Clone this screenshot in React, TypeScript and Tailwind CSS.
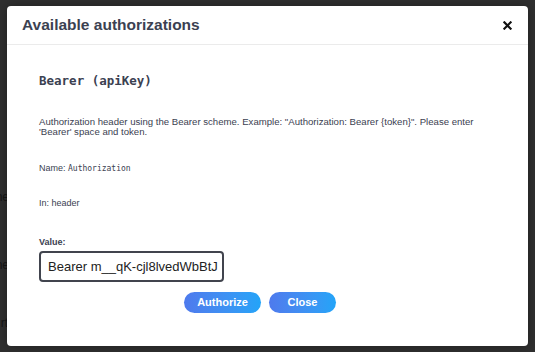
export default function App() {
  return (
    <div className="relative h-[352px] w-[535px] overflow-hidden bg-[#2f2f2f] font-['Liberation_Sans',Arial,sans-serif]">
      {/* page behind the backdrop */}
      <div className="flex w-[7px] flex-col items-end overflow-hidden pt-[188px] text-[12px] text-[#151515]">
        <span className="mr-[-2px] whitespace-nowrap">ne</span>
        <span className="mr-[-2px] mt-[50px] whitespace-nowrap">ne</span>
        <span className="mr-[-1px] mt-[40px] whitespace-nowrap">rt</span>
      </div>

      {/* modal */}
      <div className="absolute left-[7px] top-[6px] flex h-[340px] w-[521px] flex-col rounded-[4px] bg-white shadow-[0_0_10px_rgba(0,0,0,0.3)]">
        <div className="flex h-[39px] items-center justify-between border-b border-[#ebebeb] pl-[15px] pr-[13px]">
          <h3 className="text-[15.5px] font-bold text-[#3b4151]">Available authorizations</h3>
          <button className="flex h-4 w-4 items-center justify-center">
            <svg width="9" height="9" viewBox="0 0 10 10">
              <path d="M1.5 1.5 L8.5 8.5 M8.5 1.5 L1.5 8.5" stroke="#111" strokeWidth="2.4" strokeLinecap="square" />
            </svg>
          </button>
        </div>

        <div className="flex flex-col pl-[32px] pt-[28px] text-[#3b4151]">
          <h4 className="font-['DejaVu_Sans_Mono',monospace] text-[12.5px] font-bold leading-[16px] text-[#3b4151]">
            Bearer (apiKey)
          </h4>
          <p className="mt-[28px] whitespace-nowrap text-[9.6px] leading-[10px]">
            Authorization header using the Bearer scheme. Example: "Authorization: Bearer {"{token}"}". Please enter
            <br />
            'Bearer' space and token.
          </p>
          <p className="mt-[25px] text-[9px] leading-[12px]">
            Name: <code className="font-['DejaVu_Sans_Mono',monospace] text-[8px]">Authorization</code>
          </p>
          <p className="mt-[22px] text-[9px] leading-[12px]">In: header</p>
          <label className="mt-[27px] text-[9px] font-bold leading-[12px]">Value:</label>
          <div className="mt-[3px] flex h-[31px] w-[185px] items-center overflow-hidden whitespace-nowrap rounded-[4px] border-2 border-[#41444e] pl-[7px] text-[13px] text-[#222]">
            Bearer m__qK-cjl8lvedWbBtJ
          </div>
        </div>

        <div className="mt-[10px] flex justify-center gap-[8px] pr-[15px]">
          <button className="h-[21px] w-[77px] rounded-full bg-gradient-to-r from-[#4e7aed] to-[#22a4f8] text-[11px] font-bold text-white">
            Authorize
          </button>
          <button className="h-[21px] w-[67px] rounded-full bg-gradient-to-r from-[#4e7aed] to-[#22a4f8] text-[11px] font-bold text-white">
            Close
          </button>
        </div>
      </div>
    </div>
  );
}
